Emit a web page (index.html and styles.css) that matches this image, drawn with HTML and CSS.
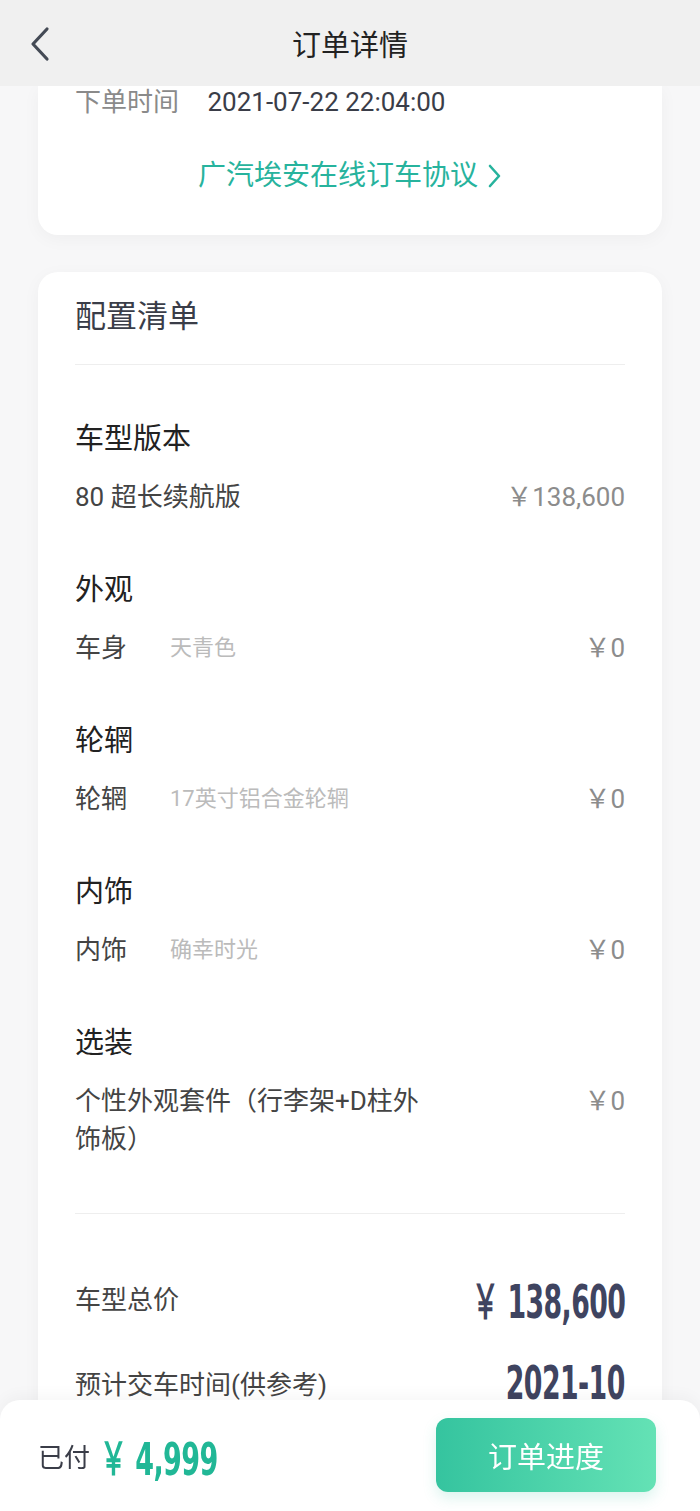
FILE: index.html
```html
<!DOCTYPE html>
<html lang="zh-CN">
<head>
  <meta charset="UTF-8">
  <title>订单详情</title>
  <link rel="stylesheet" href="styles.css">
</head>
<body>
  <!-- Barre de titre -->
  <div class="header">
    <svg class="back" width="24" height="36" viewBox="0 0 24 36">
      <path d="M19 3 L5 18 L19 33" fill="none" stroke="#444a55" stroke-width="3.2" stroke-linecap="round" stroke-linejoin="round"/>
    </svg>
    <div class="header-title">订单详情</div>
  </div>

  <div class="content">
    <!-- Infos commande -->
    <div class="card card-top">
      <div class="info-row">
        <span class="info-label">下单时间</span>
        <span class="info-value">2021-07-22 22:04:00</span>
      </div>
      <div class="agreement">
        广汽埃安在线订车协议
        <svg width="16" height="26" viewBox="0 0 16 26">
          <path d="M4 3 L13 13 L4 23" fill="none" stroke="#27b39d" stroke-width="2.6" stroke-linecap="round" stroke-linejoin="round"/>
        </svg>
      </div>
    </div>

    <!-- Configuration -->
    <div class="card card-config">
      <div class="card-title">配置清单</div>

      <div class="group">
        <div class="group-title">车型版本</div>
        <div class="item">
          <span class="item-name">80 超长续航版</span>
          <span class="item-price">￥138,600</span>
        </div>
      </div>

      <div class="group">
        <div class="group-title">外观</div>
        <div class="item">
          <span class="item-name short">车身</span>
          <span class="item-desc">天青色</span>
          <span class="item-price">￥0</span>
        </div>
      </div>

      <div class="group">
        <div class="group-title">轮辋</div>
        <div class="item">
          <span class="item-name short">轮辋</span>
          <span class="item-desc">17英寸铝合金轮辋</span>
          <span class="item-price">￥0</span>
        </div>
      </div>

      <div class="group">
        <div class="group-title">内饰</div>
        <div class="item">
          <span class="item-name short">内饰</span>
          <span class="item-desc">确幸时光</span>
          <span class="item-price">￥0</span>
        </div>
      </div>

      <div class="group">
        <div class="group-title">选装</div>
        <div class="item">
          <span class="item-name wide">个性外观套件（行李架+D柱外饰板）</span>
          <span class="item-price">￥0</span>
        </div>
      </div>

      <div class="summary">
        <div class="summary-row">
          <span class="summary-label">车型总价</span>
          <span class="big-num">￥ 138,600</span>
        </div>
        <div class="summary-row second">
          <span class="summary-label">预计交车时间(供参考)</span>
          <span class="big-num">2021-10</span>
        </div>
      </div>
    </div>
  </div>

  <!-- Barre du bas -->
  <div class="bottom-bar">
    <div class="paid">
      <span class="paid-label">已付</span>
      <span class="paid-amount">￥ 4,999</span>
    </div>
    <button type="button" class="progress-btn">订单进度</button>
  </div>
</body>
</html>
```

FILE: styles.css
```css
body {
  margin: 0;
  background-color: #f7f7f8;
  font-family: Roboto, "Noto Sans CJK SC", sans-serif;
  color: #333;
}
.header {
  position: relative;
  height: 86px;
  background: #f0f0f0;
  display: flex;
  align-items: center;
  justify-content: center;
}
.back {
  position: absolute;
  left: 28px;
  top: 26px;
}
.header-title {
  font-size: 29px;
  color: #222;
}
.content {
  padding: 0 38px 140px;
}
.card {
  background: white;
  border-radius: 20px;
  box-shadow: 0 4px 18px rgba(0,0,0,0.04);
}
.card-top {
  border-radius: 0 0 20px 20px;
  padding: 0 37px 42px;
}
.info-row {
  line-height: 32px;
  font-size: 26px;
}
.info-label {
  color: #8a8a8a;
  margin-right: 22px;
}
.info-value {
  color: #3a3d48;
}
.agreement {
  margin-top: 41px;
  line-height: 34px;
  font-size: 28px;
  color: #27b39d;
  display: flex;
  justify-content: center;
  align-items: center;
  gap: 8px;
}
.card-config {
  margin-top: 37px;
  padding: 0 37px 20px;
}
.card-title {
  padding: 25px 0 27px;
  line-height: 40px;
  font-size: 31px;
  color: #3a3d48;
  border-bottom: 1px solid #eeeeee;
}
.group {
  padding-top: 54px;
}
.group-title {
  line-height: 40px;
  font-size: 29px;
  color: #222;
}
.item {
  margin-top: 19px;
  display: flex;
  align-items: flex-start;
  line-height: 38px;
  font-size: 26px;
}
.item-name {
  color: #444;
}
.item-name.short {
  width: 95px;
  flex-shrink: 0;
}
.item-name.wide {
  width: 350px;
}
.item-desc {
  color: #bbbbbb;
  font-size: 22px;
}
.item-price {
  margin-left: auto;
  color: #8c8c8c;
}
.summary {
  margin-top: 55px;
  border-top: 1px solid #eeeeee;
  padding-top: 53px;
}
.summary-row {
  display: flex;
  justify-content: space-between;
  align-items: center;
  height: 60px;
}
.summary-row.second {
  margin-top: 25px;
}
.summary-label {
  font-size: 26px;
  color: #444;
}
.big-num {
  display: inline-block;
  font-family: "DejaVu Sans", sans-serif;
  font-weight: bold;
  font-size: 47px;
  letter-spacing: -1px;
  color: #3f4460;
  transform: scaleX(0.57);
  transform-origin: right center;
}
.bottom-bar {
  position: fixed;
  left: 0;
  right: 0;
  bottom: 0;
  height: 111px;
  box-sizing: border-box;
  padding: 18px 44px 19px 38px;
  background: white;
  border-radius: 20px 20px 0 0;
  box-shadow: 0 -4px 16px rgba(0,0,0,0.04);
  display: flex;
  justify-content: space-between;
  align-items: center;
}
.paid {
  display: flex;
  align-items: center;
  gap: 10px;
}
.paid-label {
  font-size: 26px;
  color: #3a3d48;
}
.paid-amount {
  display: inline-block;
  font-family: "DejaVu Sans", sans-serif;
  font-weight: bold;
  font-size: 45px;
  letter-spacing: -1px;
  color: #21b796;
  transform: scaleX(0.6);
  transform-origin: left center;
}
.progress-btn {
  width: 220px;
  height: 74px;
  border: none;
  border-radius: 12px;
  background: linear-gradient(90deg, #35c49f, #64e2b5);
  box-shadow: 0 6px 14px rgba(53,196,159,0.18);
  color: white;
  font-family: "Noto Sans CJK SC", sans-serif;
  font-size: 29px;
  cursor: pointer;
}
```
